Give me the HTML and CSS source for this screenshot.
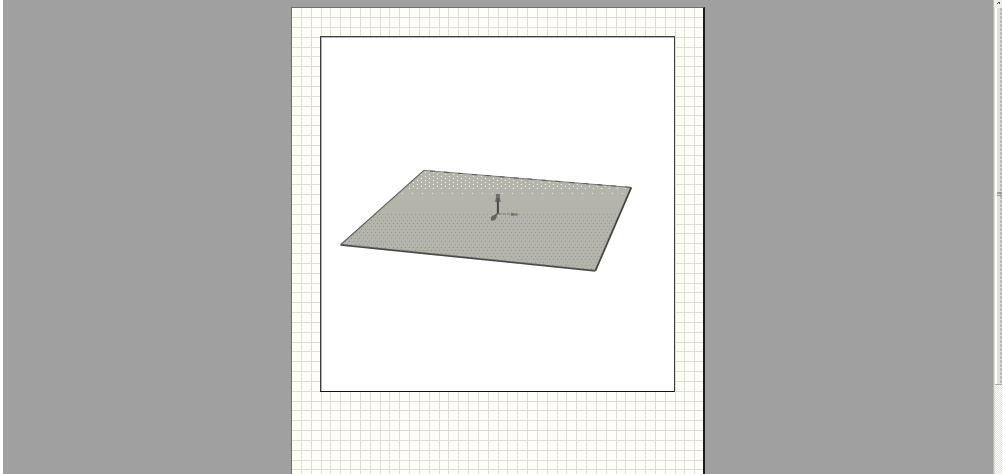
FILE: index.html
```html
<!DOCTYPE html>
<html lang="en">
<head>
<meta charset="utf-8">
<meta name="viewport" content="width=device-width, initial-scale=1">
<title>Layout sheet</title>
<link rel="stylesheet" href="styles.css">
</head>
<body>
<div class="workspace">
  <main class="desk">
    <section class="sheet">
      <svg class="grid" aria-hidden="true">
        <defs>
          <pattern id="squares" y="1" width="59" height="59" patternUnits="userSpaceOnUse">
            <path d="M9.500 0V59M19.500 0V59M29.500 0V59M38.500 0V59M48.500 0V59M58.500 0V59M0 8.500H59M0 18.500H59M0 28.500H59M0 38.500H59M0 47.500H59M0 57.500H59" stroke="#deded9" fill="none"/>
          </pattern>
        </defs>
        <rect width="100%" height="100%" fill="url(#squares)"/>
      </svg>
      <div class="viewport">
        <svg class="scene" viewBox="321 37 354 354" role="img" aria-label="Flat slab with axis marker">
          <defs>
            <clipPath id="slab"><path d="M341 244.500L424 171L631 187.500L595 270.500Z"/></clipPath>
            <pattern id="light" width="8" height="4" patternUnits="userSpaceOnUse">
              <rect x="1" y="0" width="1" height="1" fill="#fff"/>
              <rect x="5" y="2" width="1" height="1" fill="#fff"/>
            </pattern>
            <pattern id="sparse" width="10" height="6" patternUnits="userSpaceOnUse">
              <rect x="2" y="1" width="1" height="1" fill="#f4f4ee"/>
            </pattern>
            <pattern id="dark" width="4" height="6" patternUnits="userSpaceOnUse">
              <rect x="1" y="1" width="1" height="1" fill="#909090"/>
              <rect x="3" y="4" width="1" height="1" fill="#909090"/>
            </pattern>
          </defs>
          <path d="M341 244.500L424 171L631 187.500L595 270.500Z" fill="#b4b4aa"/>
          <g clip-path="url(#slab)" shape-rendering="crispEdges">
            <rect x="340" y="170" width="292" height="19" fill="url(#light)"/>
            <rect x="340" y="189" width="292" height="5" fill="url(#sparse)"/>
            <rect x="340" y="213" width="292" height="60" fill="url(#dark)"/>
          </g>
          <path d="M341 244.500L424 170.500" stroke="#555" stroke-width="1.200"/>
          <path d="M424 170.500L631 187.500" stroke="#77776f"/>
          <path d="M430 171L631 187.500" stroke="#555" stroke-dasharray="5 9"/>
          <path d="M631.500 187.500L595.500 271" stroke="#444" stroke-width="1.800"/>
          <path d="M340.500 245L595.500 271" stroke="#484846" stroke-width="1.800"/>
          <path d="M344 244.500L594 270" stroke="#777" stroke-dasharray="2 6"/>
          <path d="M498 213.500V200" stroke="#555" stroke-width="2"/>
          <path d="M498 213.500V200" stroke="#222" stroke-dasharray="1 1"/>
          <path d="M496 194h4v4l1 4h-6l1-4Z" fill="#707070"/>
          <path d="M497 198h2v4h-2Z" fill="#555"/>
          <path d="M499 214H511" stroke="#777" stroke-dasharray="3 1"/>
          <path d="M511 212.500l4 1h3v2h-3l-4 .5Z" fill="#777"/>
          <path d="M498 213.500L494 217" stroke="#555" stroke-width="1.500"/>
          <path d="M491 217l3-2 3 1-1 3-3 2-2-1Z" fill="#666"/>
        </svg>
      </div>
    </section>
  </main>
  <aside class="scroll" aria-label="Vertical scroll">
    <button class="arrow" type="button" aria-label="Scroll up">
      <svg class="arrow-icon" viewBox="0 0 8 8" aria-hidden="true"><path d="M3 3H4V2H6V4H5V3H4V4H3Z" fill="#444"/></svg>
    </button>
    <div class="track">
      <div class="thumb"><span class="shine"></span><span class="face"></span><span class="ticks"></span><span class="grip"></span></div>
    </div>
  </aside>
</div>
</body>
</html>
```

FILE: styles.css
```css
* {
  box-sizing: border-box;
}

body {
  margin: 0;
  background: #fff;
  overflow: hidden;
}

.workspace {
  display: flex;
  height: 100vh;
  padding: 0 1px 0 3px;
}

.desk {
  flex: 1;
  display: flex;
  justify-content: center;
  padding-top: 7px;
  background: #a0a0a0;
  overflow: hidden;
}

.sheet {
  position: relative;
  width: 41.9%;
  min-height: 584px;
  padding: 28px;
  background: #fffff8;
  border: 1px solid #707070;
  border-right: 2px solid #1c1c1c;
}

.grid {
  position: absolute;
  inset: 0;
  width: 100%;
  height: 100%;
}

.viewport {
  position: relative;
  aspect-ratio: 1;
  background: #fff;
  border: 1px solid #3c3c3c;
  border-bottom-color: #111;
  box-shadow: inset 1px 1px 0 #b4b4b4;
}

.scene {
  display: block;
  width: 100%;
  height: 100%;
  fill: none;
}

.scroll {
  display: flex;
  flex-direction: column;
  width: 9px;
  border-left: 1px solid #babaaa;
  background: #f0f0ec;
}

.arrow {
  flex: none;
  width: 8px;
  height: 8px;
  padding: 0;
  border: 0;
  background: #eee;
}

.arrow-icon {
  display: block;
  width: 8px;
  height: 8px;
}

.track {
  flex: 1;
  background: repeating-conic-gradient(#fff 0 25%, #e0e0dc 0 50%) 0 0 / 2px 2px;
  border-left: 1px solid #dfdfda;
}

.thumb {
  position: relative;
  display: grid;
  grid-template-columns: 2px 3px 1fr;
  height: 81%;
  border-bottom: 1px solid #aaa;
}

.shine {
  background: #fff;
}

.face {
  background: #e2e2e2;
}

.ticks {
  background: repeating-linear-gradient(#bdbdb0 0 3px, #e0e0d6 3px 4px);
}

.grip {
  position: absolute;
  top: 49%;
  right: 0;
  width: 5px;
  height: 4px;
  border-top: 2px solid #999;
  border-bottom: 1px solid #999;
}
```
